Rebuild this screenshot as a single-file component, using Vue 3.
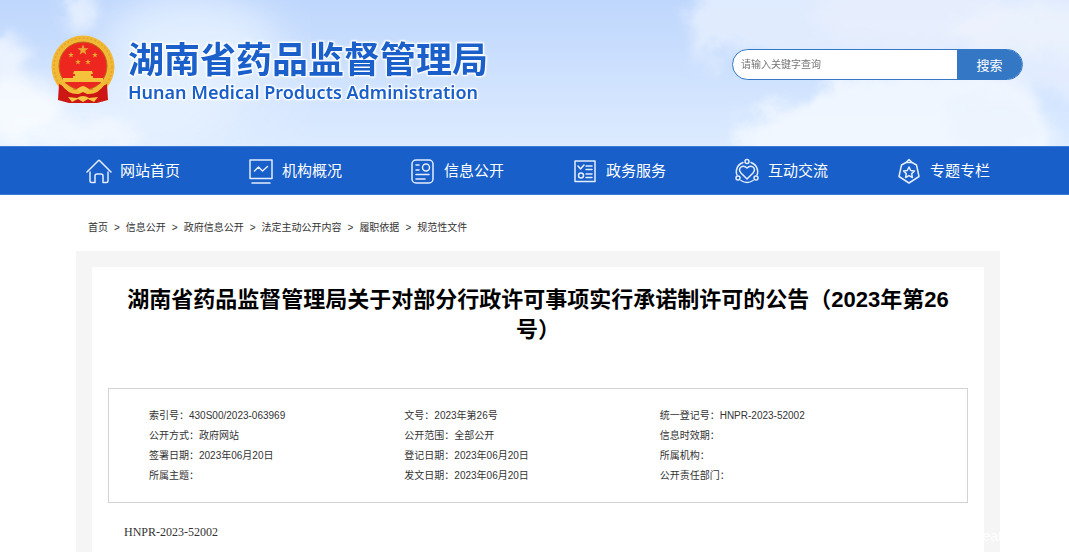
<script setup>
import { ref } from 'vue'

const keyword = ref('')
const nav = [
  { id: 'home', label: '网站首页' },
  { id: 'org', label: '机构概况' },
  { id: 'info', label: '信息公开' },
  { id: 'service', label: '政务服务' },
  { id: 'interact', label: '互动交流' },
  { id: 'topic', label: '专题专栏' },
]
const crumbs = ['首页', '信息公开', '政府信息公开', '法定主动公开内容', '履职依据', '规范性文件']
const rows = [
  [['索引号', '430S00/2023-063969'], ['文号', '2023年第26号'], ['统一登记号', 'HNPR-2023-52002']],
  [['公开方式', '政府网站'], ['公开范围', '全部公开'], ['信息时效期', '']],
  [['签署日期', '2023年06月20日'], ['登记日期', '2023年06月20日'], ['所属机构', '']],
  [['所属主题', ''], ['发文日期', '2023年06月20日'], ['公开责任部门', '']],
]
const star = '0,-10 2.4,-3.1 9.5,-3.1 3.8,1.2 5.9,8.1 0,4 -5.9,8.1 -3.8,1.2 -9.5,-3.1 -2.4,-3.1'
const stars = [
  'translate(32 15) scale(.58)',
  'translate(20 20) scale(.3)',
  'translate(44 20) scale(.3)',
  'translate(27 27) scale(.3)',
  'translate(37 27) scale(.3)',
]
</script>

<template>
  <div class="page">
    <header class="banner">
      <svg class="sky" viewBox="0 0 1069 147" preserveAspectRatio="none" aria-hidden="true">
        <defs>
          <filter id="cloud" x="-20%" y="-30%" width="140%" height="160%">
            <feGaussianBlur stdDeviation="7" result="b" />
            <feTurbulence type="fractalNoise" baseFrequency=".035" numOctaves="4" seed="6" result="n" />
            <feDisplacementMap in="b" in2="n" scale="26" />
          </filter>
          <filter id="haze" x="-40%" y="-60%" width="180%" height="220%">
            <feGaussianBlur stdDeviation="20" />
          </filter>
          <clipPath id="leftSky"><rect width="311" height="147" /></clipPath>
        </defs>
        <g clip-path="url(#leftSky)">
          <g fill="#eaf4ff" filter="url(#haze)">
            <ellipse cx="190" cy="45" rx="85" ry="50" opacity=".75" />
            <ellipse cx="90" cy="120" rx="150" ry="40" opacity=".7" />
            <ellipse cx="260" cy="80" rx="50" ry="60" opacity=".25" />
          </g>
          <g fill="#f8fbff" filter="url(#cloud)">
            <ellipse cx="6" cy="62" rx="24" ry="24" opacity=".7" />
            <ellipse cx="20" cy="108" rx="42" ry="27" opacity=".85" />
            <ellipse cx="60" cy="135" rx="80" ry="16" opacity=".6" />
            <ellipse cx="80" cy="12" rx="18" ry="20" opacity=".6" />
          </g>
        </g>
        <g filter="url(#cloud)">
          <path d="M705-20 690 22 700 70 725 45 770 56 850 60 940 78 1100 100V-20Z" fill="#e5effe" opacity=".85" />
          <ellipse cx="910" cy="15" rx="95" ry="32" fill="#eaf0fd" opacity=".7" />
          <ellipse cx="1030" cy="30" rx="80" ry="25" fill="#f0f3fe" opacity=".7" />
          <path d="M735 170 740 125 775 108 810 100 840 78 920 70 1010 78 1040 100 1060 170Z" fill="#f5f9ff" opacity=".85" />
          <ellipse cx="990" cy="125" rx="45" ry="28" fill="#ebf2fe" opacity=".6" />
        </g>
      </svg>

      <div class="banner-inner">
        <a class="brand" href="#">
          <svg class="emblem" viewBox="0 0 64 68" aria-hidden="true">
            <ellipse cx="32" cy="32" rx="31.500" ry="31.500" fill="#f1b935" />
            <ellipse cx="32" cy="32" rx="29" ry="29" fill="none" stroke="#e2a52d" stroke-width="1.500" stroke-dasharray="2 2" />
            <ellipse cx="32" cy="31" rx="24" ry="24" fill="#ed2620" stroke="#bc6a1a" />
            <polygon v-for="s in stars" :key="s" :points="star" :transform="s" fill="#e9a832" />
            <path d="M23 36h18l1 3H22zM24 39h16v3H24zM22 41h20v3H22zM12 43h40v4H12z" fill="#f5c23c" />
            <path d="M14 48h36l-8 4H22z" fill="#e9281f" />
            <path d="M8 49 20 55 29 53 32 56 35 53 44 55 56 49 57 65 46 68H18L7 65Z" fill="#cc1714" />
            <path d="M11 47q9 11 17 6 4-4 8 0 8 5 17-6l1 2q-7 11-18 10l-4-2-4 2q-11 1-18-10z" fill="#f4bd37" />
            <path d="M26 54q6-5 12 0l-3 3h-6zM17 62l9 1q6-4 12 0l9-1-4 5-6-3-5 3-5-3-6 3z" fill="#f6c744" />
          </svg>
          <span class="brand-text">
            <strong>湖南省药品监督管理局</strong>
            <span class="brand-en">Hunan Medical Products Administration</span>
          </span>
        </a>
        <form class="search" @submit.prevent>
          <input v-model="keyword" type="text" aria-label="请输入关键字查询" placeholder="请输入关键字查询" />
          <button type="submit">搜索</button>
        </form>
      </div>
    </header>

    <nav class="nav">
      <a v-for="n in nav" :key="n.id" href="#">
        <svg viewBox="0 0 26 26" aria-hidden="true">
          <g v-if="n.id === 'home'">
            <path d="M1 14 12.500 2.500Q13 2 13.500 2.500L25 14M4 14v9q0 1.500 1.500 1.500H9V18q0-2 2-2h4q2 0 2 2v6.500h3.500Q22 24.500 22 23v-9" />
          </g>
          <g v-else-if="n.id === 'org'">
            <path d="M2 2h22v18.500H2zM4 25h18M6.500 13l4-4 4 4 5-4.500" />
          </g>
          <g v-else-if="n.id === 'info'">
            <rect x="2" y="2" width="21" height="23" rx="4" />
            <circle cx="16" cy="9.500" r="3.500" />
            <path d="M6 7h3M6 12h3M6 16.500h13M6 21h9" />
          </g>
          <g v-else-if="n.id === 'service'">
            <rect x="3" y="3" width="20" height="20.500" />
            <path d="m6 8 2.500 3L12 7M14 8h6M14 11.500h6M14 16h6M14 19.500h6" />
            <circle cx="9" cy="17.500" r="2.500" />
          </g>
          <g v-else-if="n.id === 'interact'">
            <path d="M13 21 7 15Q4 11.500 7 9q3-2 6 1 3-3 6-1 3 2.500 0 6z" />
            <circle cx="13" cy="3.500" r="2" />
            <circle cx="4" cy="20" r="2" />
            <circle cx="22" cy="20" r="2" />
            <path d="M9 4.500Q3.500 6.500 2.500 12q-.5 3 .5 5M17 4.500q5.500 2 6.500 7.500.5 3-.5 5M7 22.500q6 4 12 0" />
          </g>
          <g v-else>
            <path d="M10 4.500 13 1.500l3 3M10 4.500h6L20.500 7 23 18.500l-10 6.500L3 18.500 5.500 7z" />
            <path d="m13 9 1.700 3.500 3.800.5-2.800 2.600.7 3.900-3.400-1.900-3.400 1.900.7-3.900L7.500 13l3.800-.5z" />
          </g>
        </svg>
        <span>{{ n.label }}</span>
      </a>
    </nav>

    <main class="content">
      <ol class="crumbs">
        <li v-for="c in crumbs" :key="c"><a href="#">{{ c }}</a></li>
      </ol>
      <div class="frame">
        <article>
          <h1>湖南省药品监督管理局关于对部分行政许可事项实行承诺制许可的公告（2023年第26号）</h1>
          <div class="meta">
            <table>
              <tbody>
                <tr v-for="(r, i) in rows" :key="i">
                  <td v-for="c in r" :key="c[0]">{{ c[0] }}：{{ c[1] }}</td>
                </tr>
              </tbody>
            </table>
          </div>
          <p>HNPR-2023-52002</p>
        </article>
        <span class="watermark" aria-hidden="true">eat</span>
      </div>
    </main>
  </div>
</template>

<style>
body {
  margin: 0;
  background: #fff;
}
</style>

<style scoped>
* {
  box-sizing: border-box;
}
.page {
  display: flex;
  flex-direction: column;
  min-height: 100vh;
  font-family: "Liberation Sans", "Noto Sans CJK SC", sans-serif;
  font-size: 10px;
  color: #333;
}
a {
  color: inherit;
  text-decoration: none;
}
.banner {
  position: relative;
  background: linear-gradient(#bfd7fd, #dcebff);
}
.sky {
  position: absolute;
  inset: 0;
  width: 100%;
  height: 100%;
}
.banner-inner {
  position: relative;
  display: flex;
  align-items: flex-start;
  justify-content: space-between;
  padding: 33px 46px 43px 51px;
}
.brand {
  display: flex;
  align-items: flex-end;
  gap: 13px;
}
.emblem {
  width: 64px;
  height: 68px;
}
.brand-text {
  display: flex;
  flex-direction: column;
  color: #1a5fca;
  white-space: nowrap;
  text-shadow: 0 0 2px #fff, 1px 1px 1px #fff, -1px -1px 1px #fff, 1px -1px 1px #fff, -1px 1px 1px #fff, 0 0 4px #fff;
}
.brand-text strong {
  font-family: "Noto Sans CJK SC", sans-serif;
  font-size: 36px;
  line-height: 48px;
}
.brand-en {
  font-family: "Noto Sans", sans-serif;
  font-size: 18px;
  font-weight: 600;
  line-height: 22px;
}
.search {
  display: flex;
  width: 291px;
  height: 31px;
  margin-top: 16px;
  border: 1px solid #3478c5;
  border-radius: 16px;
  overflow: hidden;
  background: #fff;
}
.search input {
  flex: 1;
  min-width: 0;
  padding: 0 8px;
  border: 0;
  outline: 0;
  background: transparent;
  font: inherit;
}
.search input::placeholder {
  color: #757575;
}
.search button {
  width: 65px;
  padding: 0;
  border: 0;
  background: #3478c5;
  color: #fff;
  font-family: inherit;
  font-size: 13px;
}
.nav {
  display: grid;
  grid-template-columns: repeat(6, 1fr);
  padding: 0 49px 0 48px;
  border-top: 1px solid #3d7ad5;
  border-bottom: 1px solid #3d7ad5;
  background: #195fca;
  color: #fff;
}
.nav a {
  display: flex;
  align-items: center;
  gap: 8px;
  height: 47px;
  padding-left: 38px;
  font-size: 15px;
  line-height: 22px;
  white-space: nowrap;
}
.nav svg {
  width: 26px;
  height: 26px;
  fill: none;
  stroke: #e3edfb;
  stroke-width: 1.5;
  stroke-linecap: round;
  stroke-linejoin: round;
}
.content {
  display: flex;
  flex: 1;
  flex-direction: column;
  padding: 0 69px 0 76px;
}
.crumbs {
  display: flex;
  margin: 0;
  padding: 25px 12px 16px;
  list-style: none;
  line-height: 15px;
}
.crumbs li + li::before {
  content: ">";
  padding: 0 6px;
}
.frame {
  position: relative;
  display: flex;
  flex: 1;
  padding: 16px 16px 0;
  background: #f5f5f5;
}
article {
  flex: 1;
  padding: 18px 16px 0;
  background: #fff;
}
h1 {
  margin: 0;
  padding: 0 16px;
  color: #000;
  font-size: 22px;
  line-height: 30px;
  text-align: center;
}
.meta {
  margin-top: 43px;
  padding: 17px 52px 16px 40px;
  border: 1px solid #d3d3d3;
}
table {
  width: 100%;
  table-layout: fixed;
  border-collapse: collapse;
}
td {
  height: 20px;
  padding: 0;
  line-height: 20px;
}
p {
  margin: 20px 16px 0;
  font-family: "Liberation Serif", serif;
  font-size: 12px;
  line-height: 18px;
}
.watermark {
  position: absolute;
  right: -2px;
  bottom: 8px;
  color: #fff;
  font-size: 14px;
  line-height: 16px;
}
</style>
